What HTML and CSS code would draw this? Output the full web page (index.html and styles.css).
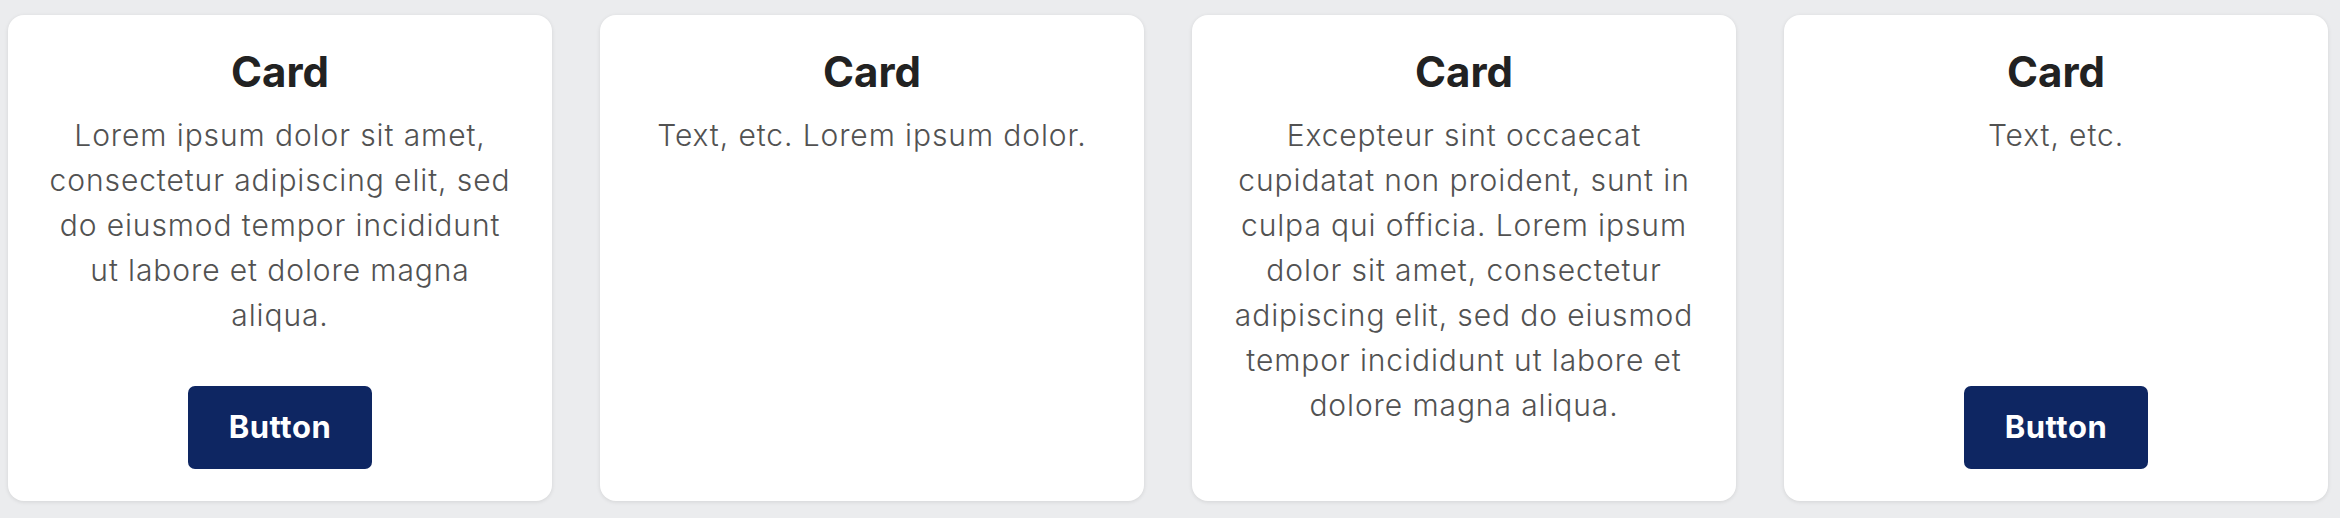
FILE: index.html
```html
<!DOCTYPE html>
<html lang="en">
<head>
<meta charset="utf-8">
<title>Cards</title>
<link rel="stylesheet" href="styles.css">
</head>
<body>
<main class="cards">
  <section class="card">
    <h2 class="card-title">Card</h2>
    <p class="card-text">Lorem ipsum dolor sit amet, consectetur adipiscing elit, sed do eiusmod tempor incididunt<br>ut labore et dolore magna aliqua.</p>
    <div class="card-actions"><button class="card-button" type="button">Button</button></div>
  </section>
  <section class="card">
    <h2 class="card-title">Card</h2>
    <p class="card-text">Text, etc. Lorem ipsum dolor.</p>
  </section>
  <section class="card">
    <h2 class="card-title">Card</h2>
    <p class="card-text">Excepteur sint occaecat cupidatat non proident, sunt in culpa qui officia. Lorem ipsum dolor sit amet, consectetur adipiscing elit, sed do eiusmod tempor incididunt ut labore et dolore magna aliqua.</p>
  </section>
  <section class="card">
    <h2 class="card-title">Card</h2>
    <p class="card-text">Text, etc.</p>
    <div class="card-actions"><button class="card-button" type="button">Button</button></div>
  </section>
</main>
</body>
</html>
```

FILE: styles.css
```css
* { box-sizing: border-box; }

html, body {
  margin: 0;
  padding: 0;
  background: #ebecee;
}

body {
  font-family: Inter, "Noto Sans", "Liberation Sans", sans-serif;
}

.cards {
  display: grid;
  grid-template-columns: repeat(4, 544px);
  gap: 48px;
  padding: 15px 12px 17px 8px;
  align-items: stretch;
}

.card {
  background: #ffffff;
  border-radius: 16px;
  box-shadow: 0 1px 4px rgba(0, 0, 0, 0.1);
  padding: 32px;
  display: flex;
  flex-direction: column;
  align-items: center;
  text-align: center;
}

.card-title {
  margin: 0 0 16px;
  font-size: 42px;
  line-height: 50px;
  font-weight: 700;
  color: #222222;
}

.card-text {
  margin: 0;
  font-size: 30px;
  line-height: 45px;
  font-weight: 350;
  letter-spacing: 0.9px;
  color: #525252;
}

.card-actions {
  margin-top: auto;
  padding-top: 48px;
}

.card-button {
  border: none;
  border-radius: 7px;
  background: #0e2662;
  color: #ffffff;
  font-family: inherit;
  font-size: 31px;
  font-weight: 700;
  letter-spacing: 0.5px;
  line-height: 36px;
  padding: 23px 41px 24px;
}
```
